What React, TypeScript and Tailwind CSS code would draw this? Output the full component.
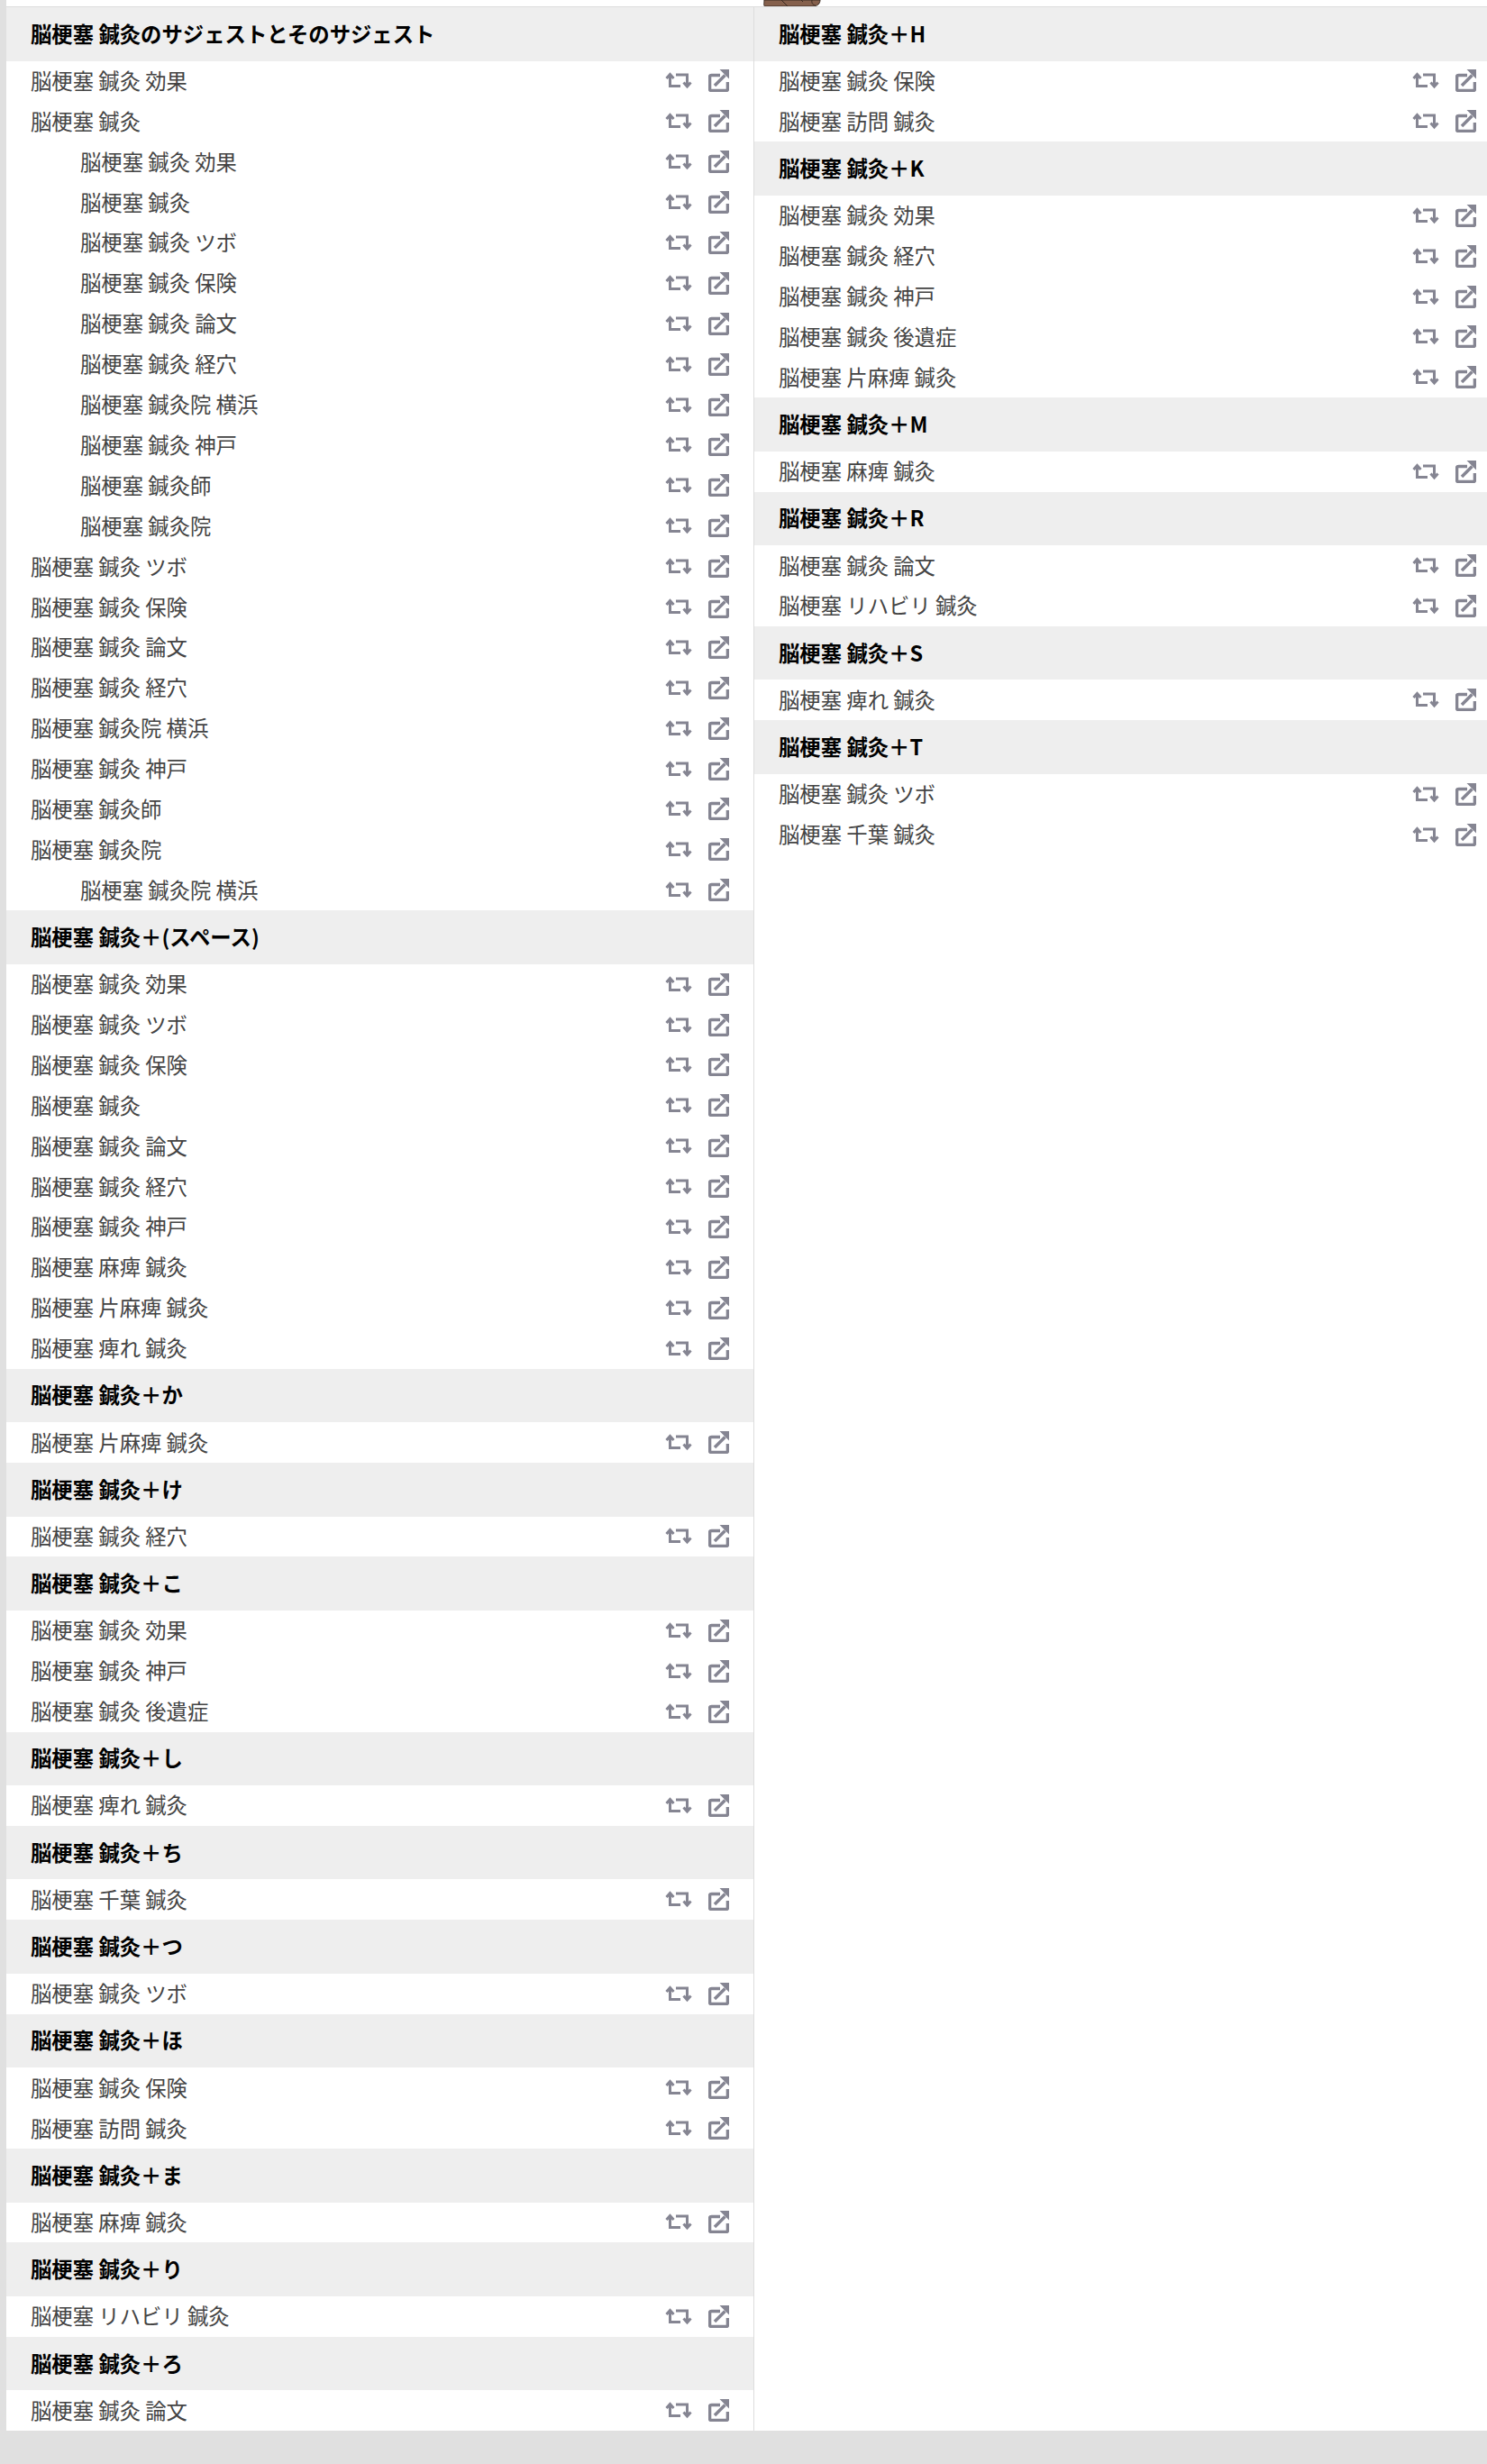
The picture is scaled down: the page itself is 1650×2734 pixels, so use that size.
import React from "react";

type Row = { label: string; sub?: boolean };
type Group = { title: string; rows: Row[] };

const r = (label: string, sub = false): Row => ({ label, sub });

const leftGroups: Group[] = [
  {
    title: "脳梗塞 鍼灸のサジェストとそのサジェスト",
    rows: [
      r("脳梗塞 鍼灸 効果"),
      r("脳梗塞 鍼灸"),
      r("脳梗塞 鍼灸 効果", true),
      r("脳梗塞 鍼灸", true),
      r("脳梗塞 鍼灸 ツボ", true),
      r("脳梗塞 鍼灸 保険", true),
      r("脳梗塞 鍼灸 論文", true),
      r("脳梗塞 鍼灸 経穴", true),
      r("脳梗塞 鍼灸院 横浜", true),
      r("脳梗塞 鍼灸 神戸", true),
      r("脳梗塞 鍼灸師", true),
      r("脳梗塞 鍼灸院", true),
      r("脳梗塞 鍼灸 ツボ"),
      r("脳梗塞 鍼灸 保険"),
      r("脳梗塞 鍼灸 論文"),
      r("脳梗塞 鍼灸 経穴"),
      r("脳梗塞 鍼灸院 横浜"),
      r("脳梗塞 鍼灸 神戸"),
      r("脳梗塞 鍼灸師"),
      r("脳梗塞 鍼灸院"),
      r("脳梗塞 鍼灸院 横浜", true),
    ],
  },
  {
    title: "脳梗塞 鍼灸\uFF0B(スペース)",
    rows: [
      r("脳梗塞 鍼灸 効果"),
      r("脳梗塞 鍼灸 ツボ"),
      r("脳梗塞 鍼灸 保険"),
      r("脳梗塞 鍼灸"),
      r("脳梗塞 鍼灸 論文"),
      r("脳梗塞 鍼灸 経穴"),
      r("脳梗塞 鍼灸 神戸"),
      r("脳梗塞 麻痺 鍼灸"),
      r("脳梗塞 片麻痺 鍼灸"),
      r("脳梗塞 痺れ 鍼灸"),
    ],
  },
  { title: "脳梗塞 鍼灸\uFF0Bか", rows: [r("脳梗塞 片麻痺 鍼灸")] },
  { title: "脳梗塞 鍼灸\uFF0Bけ", rows: [r("脳梗塞 鍼灸 経穴")] },
  {
    title: "脳梗塞 鍼灸\uFF0Bこ",
    rows: [r("脳梗塞 鍼灸 効果"), r("脳梗塞 鍼灸 神戸"), r("脳梗塞 鍼灸 後遺症")],
  },
  { title: "脳梗塞 鍼灸\uFF0Bし", rows: [r("脳梗塞 痺れ 鍼灸")] },
  { title: "脳梗塞 鍼灸\uFF0Bち", rows: [r("脳梗塞 千葉 鍼灸")] },
  { title: "脳梗塞 鍼灸\uFF0Bつ", rows: [r("脳梗塞 鍼灸 ツボ")] },
  { title: "脳梗塞 鍼灸\uFF0Bほ", rows: [r("脳梗塞 鍼灸 保険"), r("脳梗塞 訪問 鍼灸")] },
  { title: "脳梗塞 鍼灸\uFF0Bま", rows: [r("脳梗塞 麻痺 鍼灸")] },
  { title: "脳梗塞 鍼灸\uFF0Bり", rows: [r("脳梗塞 リハビリ 鍼灸")] },
  { title: "脳梗塞 鍼灸\uFF0Bろ", rows: [r("脳梗塞 鍼灸 論文")] },
];

const rightGroups: Group[] = [
  { title: "脳梗塞 鍼灸\uFF0BH", rows: [r("脳梗塞 鍼灸 保険"), r("脳梗塞 訪問 鍼灸")] },
  {
    title: "脳梗塞 鍼灸\uFF0BK",
    rows: [
      r("脳梗塞 鍼灸 効果"),
      r("脳梗塞 鍼灸 経穴"),
      r("脳梗塞 鍼灸 神戸"),
      r("脳梗塞 鍼灸 後遺症"),
      r("脳梗塞 片麻痺 鍼灸"),
    ],
  },
  { title: "脳梗塞 鍼灸\uFF0BM", rows: [r("脳梗塞 麻痺 鍼灸")] },
  { title: "脳梗塞 鍼灸\uFF0BR", rows: [r("脳梗塞 鍼灸 論文"), r("脳梗塞 リハビリ 鍼灸")] },
  { title: "脳梗塞 鍼灸\uFF0BS", rows: [r("脳梗塞 痺れ 鍼灸")] },
  { title: "脳梗塞 鍼灸\uFF0BT", rows: [r("脳梗塞 鍼灸 ツボ"), r("脳梗塞 千葉 鍼灸")] },
];

function RetweetIcon() {
  return (
    <svg width="30" height="19" viewBox="0 0 30 19" className="shrink-0" fill="none" stroke="#858592" strokeWidth="3">
      <path d="M5.500 3V15.500H17" />
      <path d="M24.500 15.500V3H12" />
      <path d="M1.500 7L5.500 2.500 9.500 7" />
      <path d="M20.500 11.500L24.500 16 28.500 11.500" />
    </svg>
  );
}

function ExternalIcon() {
  return (
    <svg width="23" height="25" viewBox="0 0 23 25" className="shrink-0" fill="none">
      <path
        d="M13 6.500H3.500a2 2 0 0 0-2 2V21.500a2 2 0 0 0 2 2H19.500a2 2 0 0 0 2-2V14"
        stroke="#858592"
        strokeWidth="3.600"
      />
      <path d="M7 18L18.500 6.500" stroke="#858592" strokeWidth="3.600" />
      <path d="M12.500 0H23V10.500z" fill="#858592" />
    </svg>
  );
}

function GroupBlock({ group }: { group: Group }) {
  return (
    <div>
      <div className="flex h-[59.5px] items-center bg-[#eeeeee] pb-[1px] pl-[27px] text-[23.36px] font-bold text-black">
        {group.title}
      </div>
      {group.rows.map((row, i) => (
        <div key={i} className="flex h-[44.9px] items-center justify-between pr-[27px] text-[23.36px] text-[#444444]">
          <span className={row.sub ? "pb-[1px] pl-[82px]" : "pb-[1px] pl-[27px]"}>{row.label}</span>
          <span className="flex items-center gap-[18px]">
            <RetweetIcon />
            <ExternalIcon />
          </span>
        </div>
      ))}
    </div>
  );
}

export default function App() {
  return (
    <div className="relative min-h-[2734px] overflow-hidden bg-[#e0e0e0] pl-[7px] font-['Noto_Sans_CJK_JP','Noto_Sans',sans-serif]">
      <div className="absolute top-0 right-0 left-[7px] h-[7px] bg-white" />
      <svg width="64" height="7" viewBox="0 0 64 7" className="absolute top-0 left-[847px]">
        <path d="M1 0C1 3 0 7 2 7H55C60 7 63 4 63 0z" fill="#85604c" stroke="#3a2a22" strokeWidth="1" />
        <path d="M20 0L27 7M42 0L44 2M54 0C53 4 56 6 58 6" fill="none" stroke="#3a2a22" strokeWidth="1" />
      </svg>
      <div className="absolute top-[7px] right-0 left-[7px] h-px bg-[#dddddd]" />
      <div className="grid grid-cols-[830px_828px] bg-white pt-[8px]">
        <div className="border-r border-[#dddddd]">
          {leftGroups.map((g) => (
            <GroupBlock key={g.title} group={g} />
          ))}
        </div>
        <div>
          {rightGroups.map((g) => (
            <GroupBlock key={g.title} group={g} />
          ))}
        </div>
      </div>
    </div>
  );
}
